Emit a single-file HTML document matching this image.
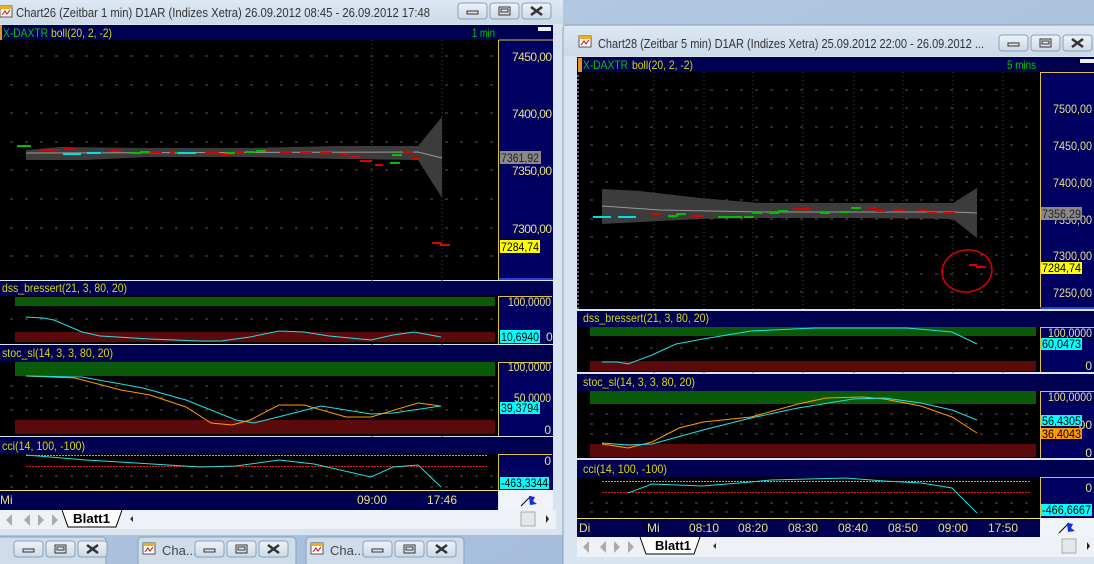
<!DOCTYPE html>
<html><head><meta charset="utf-8"><style>
html,body{margin:0;padding:0;background:#c4d5e8;width:1094px;height:564px;overflow:hidden}
svg{display:block}
text{font-family:"Liberation Sans",sans-serif}
</style></head><body>
<svg width="1094" height="564" viewBox="0 0 1094 564" xmlns="http://www.w3.org/2000/svg">
<defs>
<linearGradient id="bg" x1="0" y1="0" x2="1" y2="1"><stop offset="0" stop-color="#b8cde4"/><stop offset="1" stop-color="#9fb9d6"/></linearGradient>
<linearGradient id="tb" x1="0" y1="0" x2="0" y2="1"><stop offset="0" stop-color="#dde8f3"/><stop offset="1" stop-color="#cbd9e8"/></linearGradient>
<linearGradient id="btn" x1="0" y1="0" x2="0" y2="1"><stop offset="0" stop-color="#eef3f8"/><stop offset="1" stop-color="#cdd9e6"/></linearGradient>
<g id="btns">
 <rect x="0" y="0" width="29" height="16" rx="3" fill="url(#btn)" stroke="#8aa0b8"/>
 <rect x="9" y="8" width="11" height="3" fill="none" stroke="#333"/>
 <rect x="32" y="0" width="29" height="16" rx="3" fill="url(#btn)" stroke="#8aa0b8"/>
 <rect x="41" y="4" width="11" height="8" fill="none" stroke="#333"/><rect x="43" y="6" width="7" height="3" fill="none" stroke="#333"/>
 <rect x="64" y="0" width="29" height="16" rx="3" fill="url(#btn)" stroke="#8aa0b8"/>
 <path d="M73 4 L84 12 M84 4 L73 12" stroke="#333" stroke-width="2.5"/>
</g>
<g id="icon"><rect x="0" y="0" width="12" height="11" fill="#fff" stroke="#555"/><rect x="0" y="0" width="12" height="3" fill="#e8b020"/><path d="M2 9 L5 5 L7 8 L10 4" stroke="#d00" fill="none"/></g>
<g id="flag"><path d="M0 12 L10 2" stroke="#000"/><path d="M8 2 L14 3 L12 7 L16 10 L9 11 Z" fill="#1030e0"/></g>
</defs>
<rect width="1094" height="564" fill="url(#bg)"/>

<!-- ============ LEFT WINDOW ============ -->
<rect x="0" y="0" width="563" height="535" fill="#d8e4f0"/>
<rect x="0" y="0" width="563" height="24" fill="url(#tb)"/>
<use href="#icon" x="0" y="6"/>
<text x="16" y="17" font-size="13" fill="#333" textLength="414" lengthAdjust="spacingAndGlyphs">Chart26 (Zeitbar 1 min)  D1AR (Indizes Xetra) 26.09.2012 08:45 - 26.09.2012 17:48</text>
<use href="#btns" x="458" y="3"/>
<!-- header -->
<rect x="0" y="25" width="553" height="15" fill="#000050"/>
<rect x="0" y="25" width="2" height="15" fill="#e89020"/>
<text x="3" y="37" font-size="12" fill="#00c800" textLength="45" lengthAdjust="spacingAndGlyphs">X-DAXTR</text><text x="51" y="37" font-size="12" fill="#d8d800" textLength="61" lengthAdjust="spacingAndGlyphs">boll(20, 2, -2)</text>
<text x="472" y="37" font-size="12" fill="#00c800" textLength="23" lengthAdjust="spacingAndGlyphs">1 min</text>
<rect x="538" y="27" width="13" height="4" fill="#eee"/>
<!-- price chart -->
<rect x="0" y="40" width="498" height="240" fill="#000"/>
<g stroke="#555" stroke-dasharray="3,12" stroke-width="1">
<line x1="10" y1="56" x2="498" y2="56"/><line x1="10" y1="85" x2="498" y2="85"/><line x1="10" y1="113" x2="498" y2="113"/><line x1="10" y1="142" x2="498" y2="142"/><line x1="10" y1="170" x2="498" y2="170"/><line x1="10" y1="199" x2="498" y2="199"/><line x1="10" y1="228" x2="498" y2="228"/><line x1="10" y1="256" x2="498" y2="256"/>
</g>
<g stroke="#444" stroke-dasharray="1,3"><line x1="372" y1="40" x2="372" y2="490"/><line x1="442" y1="40" x2="442" y2="490"/></g>
<path d="M26 150 L60 147 L150 148 L250 148 L340 146 L418 146 L442 117 L442 198 L418 160 L340 159 L250 157 L150 157 L85 160 L26 160 Z" fill="#3c3c3c"/>
<path d="M26 153 L418 152 L442 158" stroke="#999" fill="none"/>
<g stroke-width="2" fill="none">
<path d="M40 150 h18 M64 149 h12 M90 152 h12 M110 151 h12 M132 153 h12 M150 152 h12 M170 152 h12 M205 153 h14 M220 154 h12 M232 153 h12 M255 150 h12 M280 152 h12 M300 153 h12 M320 153 h12 M340 154 h8 M350 157 h10 M360 161 h12 M375 165 h8 M403 152 h10 M412 159 h8" stroke="#e00000"/>
<path d="M17 146 h14 M130 153 h12 M140 152 h10 M175 153 h12 M225 153 h10 M245 152 h10 M256 151 h10 M390 163 h10 M392 155 h10" stroke="#00c000"/>
<path d="M63 154 h18 M87 153 h14 M178 153 h18" stroke="#00e0e0"/>
<path d="M432 243 h10 M440 245 h10" stroke="#e00000"/>
</g>
<!-- price axis -->
<rect x="499" y="40" width="54" height="240" fill="#000060"/>
<line x1="498.5" y1="40" x2="498.5" y2="280" stroke="#e0c040"/>
<line x1="499" y1="40" x2="553" y2="40" stroke="#e0c040"/>
<line x1="499" y1="279" x2="553" y2="279" stroke="#2040e0" stroke-width="2"/>
<g font-size="12" fill="#e8e080" text-anchor="end" lengthAdjust="spacingAndGlyphs">
<text x="552" y="61" textLength="40">7450,00</text><text x="552" y="118" textLength="40">7400,00</text><text x="552" y="175" textLength="40">7350,00</text><text x="552" y="233" textLength="40">7300,00</text>
</g>
<rect x="500" y="151" width="41" height="13" fill="#888"/><text x="501" y="162" font-size="12" fill="#222" textLength="38" lengthAdjust="spacingAndGlyphs">7361,92</text>
<rect x="500" y="240" width="40" height="13" fill="#ffff00"/><text x="501" y="251" font-size="12" fill="#000" textLength="38" lengthAdjust="spacingAndGlyphs">7284,74</text>

<!-- dss -->
<rect x="0" y="281" width="553" height="15" fill="#000050"/>
<text x="2" y="292" font-size="12" fill="#d8d800" textLength="125" lengthAdjust="spacingAndGlyphs">dss_bressert(21, 3, 80, 20)</text>
<rect x="0" y="296" width="498" height="48" fill="#000"/>
<rect x="15" y="297" width="480" height="9" fill="#0a5a0a"/>
<rect x="15" y="332" width="480" height="10" fill="#5a0a0a"/>
<g stroke="#555" stroke-dasharray="3,12"><line x1="10" y1="319" x2="498" y2="319"/></g>
<polyline points="26,317 43,318 54,320 82,332 100,336 150,339 200,341 221,341 250,337 279,331 304,332 329,336 371,340 393,335 414,332 441,337" stroke="#20e0e0" fill="none"/>
<rect x="499" y="296" width="54" height="48" fill="#000060"/>
<path d="M498.5 344 V296.5 H552" stroke="#e0c040" fill="none"/>
<text x="551" y="306" font-size="12" fill="#e8e080" text-anchor="end" textLength="43" lengthAdjust="spacingAndGlyphs">100,0000</text>
<rect x="500" y="330" width="40" height="13" fill="#00ffff"/><text x="501" y="341" font-size="12" fill="#000" textLength="38" lengthAdjust="spacingAndGlyphs">10,6940</text>
<text x="546" y="341" font-size="12" fill="#e8e080">0</text>

<!-- stoc -->
<rect x="0" y="345" width="553" height="17" fill="#000050"/>
<text x="2" y="357" font-size="12" fill="#d8d800" textLength="111" lengthAdjust="spacingAndGlyphs">stoc_sl(14, 3, 3, 80, 20)</text>
<rect x="0" y="362" width="498" height="74" fill="#000"/>
<rect x="15" y="362" width="480" height="14" fill="#0a5a0a"/>
<rect x="15" y="420" width="480" height="14" fill="#5a0a0a"/>
<g stroke="#555" stroke-dasharray="3,12"><line x1="10" y1="386" x2="498" y2="386"/><line x1="10" y1="398" x2="498" y2="398"/><line x1="10" y1="410" x2="498" y2="410"/></g>
<polyline points="26,376 75,378 121,390 150,395 186,407 211,423 232,425 250,420 279,405 304,405 346,417 371,417 418,403 441,406" stroke="#ff9900" fill="none"/>
<polyline points="26,376 82,377 143,388 186,400 236,420 254,423 286,415 321,406 371,414 393,413 441,406" stroke="#20e0e0" fill="none"/>
<rect x="499" y="362" width="54" height="74" fill="#000060"/>
<path d="M498.5 436 V362.5 H552" stroke="#e0c040" fill="none"/>
<g font-size="12" fill="#e8e080" text-anchor="end"><text x="551" y="371" textLength="43" lengthAdjust="spacingAndGlyphs">100,0000</text><text x="551" y="402" textLength="37" lengthAdjust="spacingAndGlyphs">50,0000</text><text x="551" y="434">0</text></g>
<rect x="500" y="402" width="40" height="12" fill="#00ffff"/><text x="501" y="412" font-size="12" fill="#000" textLength="38" lengthAdjust="spacingAndGlyphs">39,3794</text>

<!-- cci -->
<rect x="0" y="437" width="553" height="17" fill="#000050"/>
<text x="2" y="450" font-size="12" fill="#d8d800" textLength="83" lengthAdjust="spacingAndGlyphs">cci(14, 100, -100)</text>
<rect x="0" y="454" width="498" height="36" fill="#000"/>
<g stroke="#555" stroke-dasharray="3,12"><line x1="10" y1="476" x2="498" y2="476"/><line x1="10" y1="487" x2="498" y2="487"/></g>
<line x1="26" y1="455.5" x2="487" y2="455.5" stroke="#40e040" stroke-dasharray="2,1"/>
<line x1="26" y1="466.5" x2="487" y2="466.5" stroke="#e02020" stroke-dasharray="2,1"/>
<polyline points="26,455 86,460 136,463 200,467 236,466 279,460 314,464 371,477 393,467 418,465 441,487" stroke="#20e0e0" fill="none"/>
<rect x="499" y="454" width="54" height="36" fill="#000060"/>
<path d="M498.5 490 V454.5 H552" stroke="#e0c040" fill="none"/>
<text x="551" y="465" font-size="12" fill="#e8e080" text-anchor="end">0</text>
<rect x="500" y="477" width="49" height="12" fill="#00ffff"/><text x="501" y="487" font-size="12" fill="#000" textLength="47" lengthAdjust="spacingAndGlyphs">-463,3344</text>
<!-- time axis -->
<rect x="0" y="490" width="498" height="20" fill="#000050"/>
<line x1="0" y1="490.5" x2="498" y2="490.5" stroke="#e8e060"/>
<g font-size="12" fill="#e8e080"><text x="0" y="504">Mi</text><text x="357" y="504" textLength="30" lengthAdjust="spacingAndGlyphs">09:00</text><text x="427" y="504" textLength="30" lengthAdjust="spacingAndGlyphs">17:46</text></g>
<rect x="499" y="490" width="54" height="20" fill="#f0f4f8"/>
<use href="#flag" x="521" y="494"/>
<!-- tab row -->
<rect x="0" y="510" width="556" height="19" fill="#eef2f6"/>
<g fill="#aaa"><path d="M4 514 V526 M6 520 L12 514 V526 Z M24 520 L30 514 V526 Z M38 514 V526 L44 520 Z M52 514 V526 L58 520 Z M58 514 V526"/></g>
<path d="M62 510 L68 527 H116 L122 510" fill="#fff" stroke="#000"/>
<text x="73" y="523" font-size="13" font-weight="bold" fill="#000" textLength="37" lengthAdjust="spacingAndGlyphs">Blatt1</text>
<path d="M133 516 L130 519 L133 522 Z" fill="#333"/>
<rect x="521" y="512" width="14" height="14" fill="#e4e8ec" stroke="#aaa"/>
<path d="M546 515 L549 519 L546 523 Z" fill="#222"/>
<!-- taskbar windows -->
<g>
<rect x="-4" y="537" width="110" height="30" rx="4" fill="#cfdcea" stroke="#8aa0b8"/>
<use href="#btns" x="14" y="541"/>
<rect x="138" y="537" width="158" height="30" rx="4" fill="#cfdcea" stroke="#8aa0b8"/>
<use href="#icon" x="143" y="543"/><text x="162" y="555" font-size="13" fill="#444">Cha...</text>
<use href="#btns" x="195" y="541"/>
<rect x="306" y="537" width="158" height="30" rx="4" fill="#cfdcea" stroke="#8aa0b8"/>
<use href="#icon" x="311" y="543"/><text x="330" y="555" font-size="13" fill="#444">Cha...</text>
<use href="#btns" x="363" y="541"/>
</g>

<!-- ============ RIGHT WINDOW ============ -->
<rect x="563" y="25" width="540" height="545" rx="5" fill="#d8e4f0" stroke="#8aa0b8"/>
<rect x="564" y="26" width="540" height="30" fill="url(#tb)"/>
<use href="#icon" x="579" y="36"/>
<text x="598" y="48" font-size="13" fill="#333" textLength="386" lengthAdjust="spacingAndGlyphs">Chart28 (Zeitbar 5 min)  D1AR (Indizes Xetra) 25.09.2012 22:00 - 26.09.2012 ...</text>
<use href="#btns" x="999" y="35"/>
<rect x="577" y="57" width="517" height="15" fill="#000050"/>
<rect x="578" y="58" width="4" height="14" fill="#e89020"/>
<text x="583" y="69" font-size="12" fill="#00c800" textLength="45" lengthAdjust="spacingAndGlyphs">X-DAXTR</text><text x="632" y="69" font-size="12" fill="#d8d800" textLength="61" lengthAdjust="spacingAndGlyphs">boll(20, 2, -2)</text>
<text x="1007" y="69" font-size="12" fill="#00c800" textLength="29" lengthAdjust="spacingAndGlyphs">5 mins</text>
<rect x="1080" y="59" width="14" height="4" fill="#eee"/>
<!-- price chart -->
<rect x="577" y="72" width="463" height="237" fill="#000"/>
<g stroke="#555" stroke-dasharray="3,12">
<line x1="590" y1="90" x2="1040" y2="90"/><line x1="590" y1="108" x2="1040" y2="108"/><line x1="590" y1="127" x2="1040" y2="127"/><line x1="590" y1="145" x2="1040" y2="145"/><line x1="590" y1="164" x2="1040" y2="164"/><line x1="590" y1="182" x2="1040" y2="182"/><line x1="590" y1="200" x2="1040" y2="200"/><line x1="590" y1="219" x2="1040" y2="219"/><line x1="590" y1="237" x2="1040" y2="237"/><line x1="590" y1="255" x2="1040" y2="255"/><line x1="590" y1="274" x2="1040" y2="274"/><line x1="590" y1="292" x2="1040" y2="292"/>
</g>
<g stroke="#444" stroke-dasharray="1,3">
<line x1="654" y1="72" x2="654" y2="518"/><line x1="704" y1="72" x2="704" y2="518"/><line x1="753" y1="72" x2="753" y2="518"/><line x1="803" y1="72" x2="803" y2="518"/><line x1="854" y1="72" x2="854" y2="518"/><line x1="903" y1="72" x2="903" y2="518"/><line x1="953" y1="72" x2="953" y2="518"/><line x1="1003" y1="72" x2="1003" y2="518"/>
</g>
<g stroke="#ccc" stroke-dasharray="2,2"><line x1="578" y1="75" x2="578" y2="309"/></g>
<path d="M602 189 L640 191 L700 198 L760 203 L860 203 L953 203 L977 188 L977 238 L953 219 L860 218 L760 218 L700 219 L660 221 L602 224 Z" fill="#3c3c3c"/>
<path d="M602 206 L660 210 L760 212 L953 212 L977 213" stroke="#999" fill="none"/>
<g stroke-width="2" fill="none">
<path d="M651 214 h10 M692 216 h12 M793 209 h18 M867 208 h10 M876 211 h10 M893 210 h12 M918 210 h10 M927 213 h10 M943 213 h12" stroke="#e00000"/>
<path d="M668 216 h10 M676 214 h10 M718 217 h24 M744 217 h10 M752 213 h10 M769 213 h10 M778 211 h10 M820 213 h10 M840 212 h10 M851 208 h10" stroke="#00c000"/>
<path d="M593 217 h18 M618 217 h18" stroke="#00e0e0"/>
<path d="M969 265 h8 M976 267 h10" stroke="#e00000"/>
</g>
<ellipse cx="967" cy="271" rx="25" ry="21" fill="none" stroke="#e00000" stroke-width="1.5" transform="rotate(-8 967 271)"/>
<rect x="1040" y="72" width="54" height="237" fill="#000060"/>
<line x1="1040.5" y1="72" x2="1040.5" y2="309" stroke="#e0c040"/>
<line x1="1040" y1="72.5" x2="1094" y2="72.5" stroke="#e0c040"/>
<line x1="1040" y1="308" x2="1094" y2="308" stroke="#2040e0" stroke-width="2"/>
<g font-size="12" fill="#e8e080" text-anchor="end">
<text x="1092" y="113" textLength="39" lengthAdjust="spacingAndGlyphs">7500,00</text><text x="1092" y="150" textLength="39" lengthAdjust="spacingAndGlyphs">7450,00</text><text x="1092" y="187" textLength="39" lengthAdjust="spacingAndGlyphs">7400,00</text><text x="1092" y="224" textLength="39" lengthAdjust="spacingAndGlyphs">7350,00</text><text x="1092" y="260" textLength="39" lengthAdjust="spacingAndGlyphs">7300,00</text><text x="1092" y="297" textLength="39" lengthAdjust="spacingAndGlyphs">7250,00</text>
</g>
<rect x="1041" y="207" width="41" height="13" fill="#888"/><text x="1042" y="218" font-size="12" fill="#222" textLength="39" lengthAdjust="spacingAndGlyphs">7356,29</text>
<rect x="1041" y="262" width="41" height="12" fill="#ffff00"/><text x="1042" y="272" font-size="12" fill="#000" textLength="39" lengthAdjust="spacingAndGlyphs">7284,74</text>

<!-- dss -->
<rect x="577" y="311" width="517" height="16" fill="#000050"/>
<text x="583" y="322" font-size="12" fill="#d8d800" textLength="126" lengthAdjust="spacingAndGlyphs">dss_bressert(21, 3, 80, 20)</text>
<rect x="577" y="327" width="463" height="45" fill="#000"/>
<rect x="590" y="327" width="446" height="9" fill="#0a5a0a"/>
<rect x="590" y="361" width="446" height="10" fill="#5a0a0a"/>
<g stroke="#555" stroke-dasharray="3,12"><line x1="590" y1="348" x2="1040" y2="348"/></g>
<polyline points="602,362 618,362 628,364 652,355 676,344 703,339 751,331 815,328 907,328 952,332 977,344" stroke="#20e0e0" fill="none"/>
<rect x="1040" y="327" width="54" height="45" fill="#000060"/>
<path d="M1040.5 372 V327.5 H1094" stroke="#e0c040" fill="none"/>
<text x="1092" y="337" font-size="12" fill="#e8e080" text-anchor="end" textLength="44" lengthAdjust="spacingAndGlyphs">100,0000</text>
<rect x="1041" y="338" width="41" height="12" fill="#00ffff"/><text x="1042" y="348" font-size="12" fill="#000" textLength="39" lengthAdjust="spacingAndGlyphs">60,0473</text>
<text x="1092" y="370" font-size="12" fill="#e8e080" text-anchor="end">0</text>

<!-- stoc -->
<rect x="577" y="374" width="517" height="17" fill="#000050"/>
<text x="583" y="386" font-size="12" fill="#d8d800" textLength="112" lengthAdjust="spacingAndGlyphs">stoc_sl(14, 3, 3, 80, 20)</text>
<rect x="577" y="391" width="463" height="67" fill="#000"/>
<rect x="590" y="391" width="446" height="13" fill="#0a5a0a"/>
<rect x="590" y="444" width="446" height="13" fill="#5a0a0a"/>
<g stroke="#555" stroke-dasharray="3,12"><line x1="590" y1="414" x2="1040" y2="414"/><line x1="590" y1="424" x2="1040" y2="424"/><line x1="590" y1="434" x2="1040" y2="434"/></g>
<polyline points="602,444 628,448 652,442 679,428 703,422 751,417 798,404 826,398 863,397 884,399 921,406 952,417 977,433" stroke="#ff9900" fill="none"/>
<polyline points="602,443 628,445 652,444 703,430 751,418 798,408 853,399 884,398 921,403 952,410 977,420" stroke="#20e0e0" fill="none"/>
<rect x="1040" y="391" width="54" height="67" fill="#000060"/>
<path d="M1040.5 458 V391.5 H1094" stroke="#e0c040" fill="none"/>
<g font-size="12" fill="#e8e080" text-anchor="end"><text x="1092" y="401" textLength="44" lengthAdjust="spacingAndGlyphs">100,0000</text><text x="1092" y="429">00</text><text x="1092" y="457">0</text></g>
<rect x="1041" y="415" width="41" height="11" fill="#00ffff"/><text x="1042" y="425" font-size="12" fill="#000" textLength="39" lengthAdjust="spacingAndGlyphs">56,4305</text>
<rect x="1041" y="428" width="41" height="11" fill="#ff9900"/><text x="1042" y="438" font-size="12" fill="#000" textLength="39" lengthAdjust="spacingAndGlyphs">36,4043</text>

<!-- cci -->
<rect x="577" y="460" width="517" height="17" fill="#000050"/>
<text x="583" y="473" font-size="12" fill="#d8d800" textLength="84" lengthAdjust="spacingAndGlyphs">cci(14, 100, -100)</text>
<rect x="577" y="477" width="463" height="41" fill="#000"/>
<g stroke="#555" stroke-dasharray="3,12"><line x1="590" y1="503" x2="1040" y2="503"/><line x1="590" y1="512" x2="1040" y2="512"/></g>
<line x1="602" y1="481.5" x2="1030" y2="481.5" stroke="#40e040" stroke-dasharray="2,1"/>
<line x1="602" y1="492.5" x2="1030" y2="492.5" stroke="#e02020" stroke-dasharray="2,1"/>
<polyline points="628,493 652,484 703,486 751,482 771,480 846,478 884,481 921,483 952,488 977,513" stroke="#20e0e0" fill="none"/>
<rect x="1040" y="477" width="54" height="41" fill="#000060"/>
<path d="M1040.5 518 V477.5 H1094" stroke="#e0c040" fill="none"/>
<text x="1092" y="492" font-size="12" fill="#e8e080" text-anchor="end">0</text>
<rect x="1041" y="504" width="51" height="12" fill="#00ffff"/><text x="1042" y="514" font-size="12" fill="#000" textLength="49" lengthAdjust="spacingAndGlyphs">-466,6667</text>
<!-- time axis -->
<rect x="577" y="518" width="463" height="19" fill="#000050"/>
<line x1="577" y1="518.5" x2="1040" y2="518.5" stroke="#e8e060"/>
<g font-size="12" fill="#e8e080" lengthAdjust="spacingAndGlyphs"><text x="579" y="532">Di</text><text x="647" y="532">Mi</text>
<text x="689" y="532" textLength="30">08:10</text><text x="738" y="532" textLength="30">08:20</text><text x="788" y="532" textLength="30">08:30</text><text x="838" y="532" textLength="30">08:40</text><text x="888" y="532" textLength="30">08:50</text><text x="938" y="532" textLength="30">09:00</text><text x="988" y="532" textLength="30">17:50</text></g>
<rect x="1040" y="518" width="54" height="19" fill="#f0f4f8"/>
<use href="#flag" x="1059" y="521"/>
<!-- tab row -->
<rect x="577" y="537" width="517" height="20" fill="#eef2f6"/>
<g fill="#aaa"><path d="M581 541 V553 M583 547 L589 541 V553 Z M600 547 L606 541 V553 Z M614 541 V553 L620 547 Z M628 541 V553 L634 547 Z M634 541 V553"/></g>
<path d="M640 537 L646 554 H694 L700 537" fill="#fff" stroke="#000"/>
<text x="655" y="550" font-size="13" font-weight="bold" fill="#000" textLength="36" lengthAdjust="spacingAndGlyphs">Blatt1</text>
<path d="M716 543 L713 546 L716 549 Z" fill="#333"/>
<rect x="1062" y="539" width="14" height="14" fill="#e4e8ec" stroke="#aaa"/>
<path d="M1087 542 L1090 546 L1087 550 Z" fill="#222"/>
</svg>
</body></html>
